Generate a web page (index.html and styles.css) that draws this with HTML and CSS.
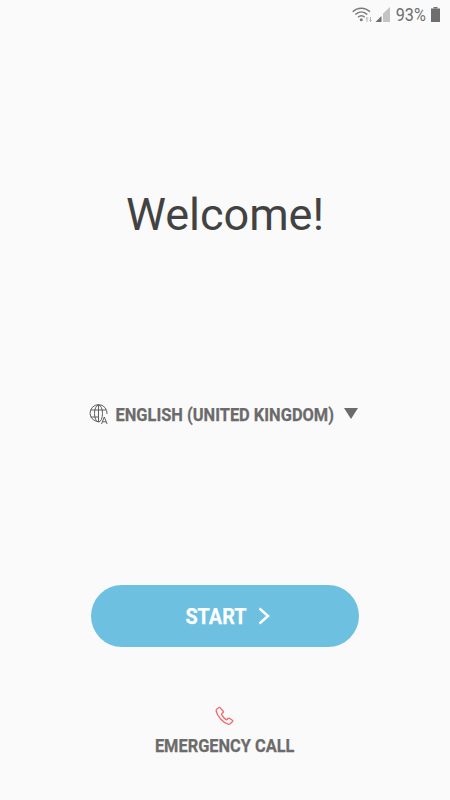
FILE: index.html
```html
<!DOCTYPE html>
<html lang="en">
<head>
<meta charset="utf-8">
<title>Welcome</title>
<link rel="stylesheet" href="styles.css">
</head>
<body>
<div class="screen">
  <div class="status">
    <svg class="wifi" width="21" height="15" viewBox="0 0 21 15" fill="none" stroke="#7a7a7a">
      <path d="M.7 4.800C5.500 0 13 0 18 4.800" stroke-width="1.500"/>
      <path d="M3.300 7.500C7 4 11.700 4 15.300 7.500" stroke-width="1.500"/>
      <path d="M6 10.200C8 8.400 10.700 8.400 12.700 10.200" stroke-width="1.500"/>
      <circle cx="9.300" cy="12.700" r="1.500" fill="#7a7a7a" stroke="none"/>
      <path d="M15 15v-4.500M13.800 11.700L15 10.500l1.200 1.200M18.500 10v4.500M17.300 13.300l1.200 1.200 1.200-1.200" stroke="#b5b5b5" stroke-width="1"/>
    </svg>
    <svg class="signal" width="15" height="15" viewBox="0 0 15 15">
      <path d="M15 0V15H8V6.500z" fill="#c4c4c4"/>
      <path d="M6.500 9V15H0.500z" fill="#6e6e6e"/>
    </svg>
    <span class="pct">93%</span>
    <svg class="battery" width="9" height="15" viewBox="0 0 9 15">
      <path d="M2.500 0h4v1.500h-4z" fill="#6e6e6e"/>
      <path d="M0 1.500h9v13.500h-9z" fill="#6e6e6e"/>
    </svg>
  </div>

  <h1 class="title">Welcome!</h1>

  <div class="language">
    <svg class="globe" width="20" height="21" viewBox="0 0 20 21" fill="none" stroke="#5f5f5f" stroke-width="1">
      <path d="M11 17.500A8.500 8.500 0 1 1 18 10"/>
      <ellipse cx="9.500" cy="9.500" rx="4" ry="8.500"/>
      <path d="M9.500 1v17M1.800 6h15.400M1.800 13h8.200"/>
      <path d="M12.500 20l2.800-7 2.800 7M13.600 17.800h3.400"/>
    </svg>
    <span class="lang-label">ENGLISH (UNITED KINGDOM)</span>
    <span class="caret"></span>
  </div>

  <button class="start" type="button">
    <span class="start-label">START</span>
    <svg width="12" height="18" viewBox="0 0 12 18" fill="none" stroke="#fff" stroke-width="2.500">
      <path d="M1.500 1.500L10 9l-8.500 7.500"/>
    </svg>
  </button>

  <div class="emergency">
    <svg class="phone" width="20" height="20" viewBox="0 0 20 20" fill="none" stroke="#f2686c" stroke-width="1.300" stroke-linejoin="round">
      <path d="M4 1.500L1.800 3c-.6.500-.8 1.200-.6 2 1.200 5.500 6.500 11.500 12 13.200.8.200 1.500 0 2-.4l2.300-2.300c.4-.4.300-1-.1-1.300l-3.100-2c-.4-.2-.8-.2-1.100.1l-1.200 1.200c-.3.300-.7.300-1 .1-1.700-1.200-3.300-3-4.300-5-.2-.4-.1-.8.200-1l1.200-1c.3-.3.400-.7.200-1.100L5.300 1.800C5 1.300 4.400 1.200 4 1.500z"/>
    </svg>
    <span class="em-label">EMERGENCY CALL</span>
  </div>
</div>
</body>
</html>
```
FILE: styles.css
```css
html, body {
  margin: 0;
  padding: 0;
}
body {
  background: #fafafa;
  font-family: Roboto, "Liberation Sans", sans-serif;
}
.screen {
  width: 450px;
  height: 800px;
  display: flex;
  flex-direction: column;
  align-items: center;
  overflow: hidden;
}
.status {
  align-self: stretch;
  height: 30px;
  box-sizing: border-box;
  padding: 7px 10px 0 0;
  display: flex;
  justify-content: flex-end;
  align-items: flex-start;
}
.wifi { margin-right: 2px; }
.signal { margin-right: 4px; }
.battery { margin-left: 4px; }
.pct {
  font-size: 18px;
  line-height: 20px;
  margin-top: -2px;
  display: inline-block;
  transform: scaleX(.9);
  color: #6e6e6e;
}
.title {
  margin: 155px 0 0;
  font-size: 45px;
  line-height: 60px;
  font-weight: 400;
  color: #424242;
}
.language {
  margin-top: 157px;
  height: 24px;
  padding-right: 3px;
  display: flex;
  align-items: center;
  color: #6b6b6b;
}
.globe { margin-right: 7px; }
.lang-label {
  font-size: 18px;
  font-weight: 700;
  display: inline-block;
  transform: scaleX(.912);
  margin: 0 -10.500px;
  -webkit-text-stroke: .25px #6b6b6b;
}
.caret {
  margin-left: 10px;
  margin-bottom: 2px;
  width: 0;
  height: 0;
  border-left: 7px solid transparent;
  border-right: 7px solid transparent;
  border-top: 11px solid #6b6b6b;
}
.start {
  margin-top: 159px;
  width: 268px;
  height: 62px;
  border: 0;
  border-radius: 31px;
  background: #6dc0e0;
  color: #fff;
  font-family: inherit;
  font-size: 22px;
  font-weight: 700;
  display: flex;
  align-items: center;
  justify-content: center;
  gap: 12px;
  padding: 0 0 0 5px;
}
.start-label {
  display: inline-block;
  transform: scaleX(.9);
  margin: 0 -3.400px;
  -webkit-text-stroke: .25px #fff;
}
.emergency {
  margin-top: 59px;
  display: flex;
  flex-direction: column;
  align-items: center;
  gap: 9px;
}
.phone { margin-left: 1px; }
.em-label {
  font-size: 18px;
  line-height: 22px;
  font-weight: 700;
  display: inline-block;
  transform: scaleX(.91);
  color: #6b6b6b;
  -webkit-text-stroke: .25px #6b6b6b;
}
```
